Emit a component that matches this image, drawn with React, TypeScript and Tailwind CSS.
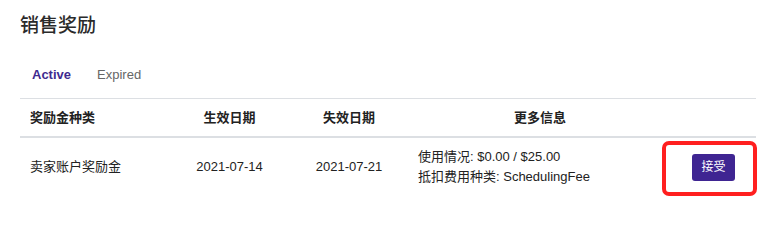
import React from "react";

const FONT = { fontFamily: '"Liberation Sans", "Noto Sans CJK SC", Arial, sans-serif' };

export default function App() {
  return (
    <div className="bg-white w-[771px] h-[242px] pl-5 pr-[15px] pt-3 text-[#222]" style={FONT}>
      <h1 className="text-[19px] leading-[28px] font-medium text-[#2a2a2a]">销售奖励</h1>

      {/* Tabs */}
      <div className="flex items-center gap-[26px] pl-3 pt-[26px] pb-[14px] border-b border-[#dcdfe3] text-[13px] leading-[18px]">
        <button className="font-bold text-[#3f2a8f]">Active</button>
        <button className="text-[#666]">Expired</button>
      </div>

      {/* Table header */}
      <div className="grid grid-cols-[150px_119px_120px_262px_85px] h-[39px] items-center border-b-2 border-[#dcdfe3] text-[13px] font-bold">
        <div className="pl-[10px]">奖励金种类</div>
        <div className="text-center">生效日期</div>
        <div className="text-center">失效日期</div>
        <div className="text-center">更多信息</div>
        <div></div>
      </div>

      {/* Row */}
      <div className="grid grid-cols-[150px_119px_120px_262px_85px] items-center pt-[9px] text-[13px] leading-[20px]">
        <div className="pl-[10px]">卖家账户奖励金</div>
        <div className="text-center">2021-07-14</div>
        <div className="text-center">2021-07-21</div>
        <div className="pl-[9px]">
          <div>使用情况: $0.00 / $25.00</div>
          <div>抵扣费用种类: SchedulingFee</div>
        </div>
        <div className="flex justify-center">
          <div className="relative">
            <button className="w-[43px] h-[27px] rounded-[3px] bg-[#3f2592] text-white text-[12px]">接受</button>
            <div className="absolute -left-[30px] -right-[22px] -top-[13px] -bottom-[15px] border-4 border-[#ff1f1f] rounded-[7px] pointer-events-none" />
          </div>
        </div>
      </div>
    </div>
  );
}
